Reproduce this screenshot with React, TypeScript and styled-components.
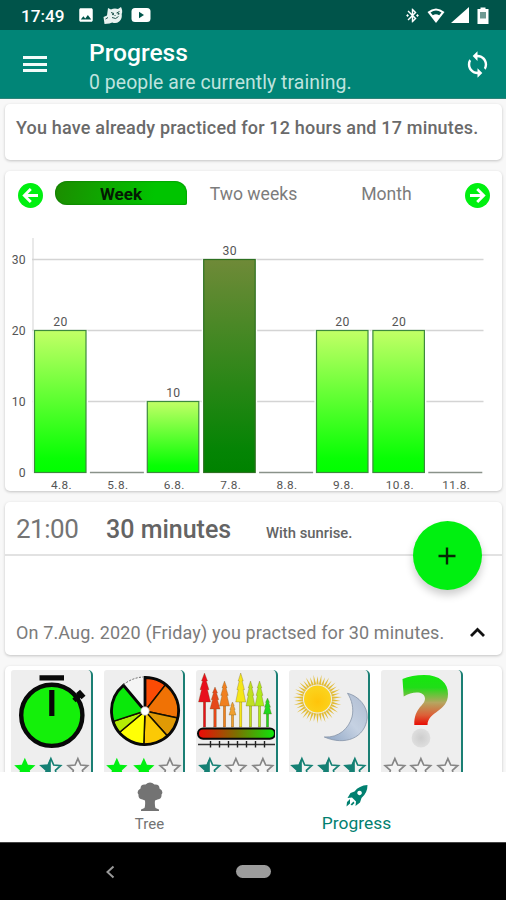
import React from "react";
import styled, { createGlobalStyle } from "styled-components";
import { MdImage, MdSync, MdBluetoothConnected } from "react-icons/md";

const GlobalStyle = createGlobalStyle`
  * { box-sizing: border-box; }
  html, body { margin: 0; padding: 0; }
  body { font-family: Roboto, "Liberation Sans", sans-serif; overflow: hidden; }
  svg { display: block; }
`;

const Screen = styled.div`
  width: 506px;
  height: 900px;
  display: flex;
  flex-direction: column;
  background: #f8f8f8;
  overflow: hidden;
`;

const StatusBar = styled.div`
  height: 30px;
  flex: none;
  display: flex;
  align-items: center;
  padding: 0 14px 0 21px;
  background: #00544a;
  color: #fff;
`;

const Clock = styled.span`
  width: 56px;
  font-size: 17.2px;
  font-weight: 500;
  line-height: 30px;
  padding-top: 2px;
`;

const Notifications = styled.div`
  display: flex;
  align-items: center;
  gap: 8px;
  flex: 1;
`;

const SystemIcons = styled.div`
  display: flex;
  align-items: center;
  gap: 5px;
`;

const AppBar = styled.header`
  height: 69px;
  flex: none;
  display: flex;
  align-items: center;
  padding: 0 14px 0 23px;
  background: #018577;
  border-bottom: 1px solid #2f8379;
  color: #fff;
`;

const MenuIcon = styled.div`
  width: 24px;
  height: 16px;
  margin-right: 42px;
  display: flex;
  flex-direction: column;
  justify-content: space-between;
`;

const MenuLine = styled.i`
  height: 3px;
  background: #f2fbf9;
`;

const Titles = styled.div`
  flex: 1;
  padding-top: 5px;
`;

const Title = styled.h1`
  margin: 0;
  font-size: 24.6px;
  line-height: 32px;
  font-weight: 500;
`;

const Subtitle = styled.div`
  font-size: 19.4px;
  line-height: 27px;
  letter-spacing: 0.07px;
  color: #bfe3de;
`;

const Content = styled.main`
  flex: 1;
  min-height: 0;
  overflow: hidden;
  display: flex;
  flex-direction: column;
  gap: 11px;
  padding: 5px 4px 0 5px;
`;

const Card = styled.section<{ $height: number }>`
  height: ${(p) => p.$height}px;
  flex: none;
  background: #fff;
  border-radius: 5px;
  box-shadow: 0 1px 3px rgba(0, 0, 0, 0.22);
`;

const Summary = styled.p`
  margin: 0;
  padding: 11px 0 0 11px;
  font-size: 18px;
  line-height: 26px;
  font-weight: 500;
  letter-spacing: 0.18px;
  color: #6a6a6a;
  white-space: nowrap;
`;

const RangeBar = styled.div`
  height: 54px;
  display: flex;
  align-items: flex-start;
  padding: 10px 12px 0 13px;
`;

const RoundArrow = styled.div`
  width: 25px;
  height: 25px;
  margin-top: 2px;
  border-radius: 50%;
  background: #00f010;
`;

const Tab = styled.div<{ $active?: boolean }>`
  width: ${(p) => (p.$active ? 132 : 133)}px;
  height: 24px;
  line-height: 26px;
  text-align: center;
  font-size: ${(p) => (p.$active ? 17 : 17.6)}px;
  font-weight: ${(p) => (p.$active ? 700 : 400)};
  color: ${(p) => (p.$active ? "#031a03" : "#7c7c7c")};
  background: ${(p) => (p.$active ? "linear-gradient(100deg, #1c8c00, #00c400 75%)" : "none")};
  border-radius: 12px 12px 2px 12px;
  box-shadow: ${(p) => (p.$active ? "inset 0 0 2px #006b00" : "none")};
`;

const Tabs = styled.div`
  flex: 1;
  display: flex;
  padding-left: 12px;
`;

const SessionHead = styled.div`
  height: 54px;
  display: flex;
  align-items: baseline;
  padding: 9px 0 0 11px;
  border-bottom: 2px solid #e2e2e2;
  line-height: 36px;
  color: #646464;
`;

const SessionTime = styled.span`
  width: 90px;
  font-size: 26px;
  letter-spacing: -0.5px;
  color: #747474;
`;

const SessionLength = styled.span`
  width: 160px;
  font-size: 25px;
  font-weight: 500;
`;

const SessionNote = styled.span`
  font-size: 14.8px;
  font-weight: 500;
`;

const SessionFoot = styled.div`
  height: 99px;
  display: flex;
  justify-content: space-between;
  align-items: flex-end;
  padding: 0 16px 9px 11px;
  font-size: 18px;
  line-height: 26px;
  letter-spacing: 0.13px;
  color: #7b7b7b;
  white-space: nowrap;
`;

const SessionCard = styled(Card)`
  position: relative;
`;

const AddButton = styled.button`
  position: absolute;
  left: 408px;
  top: 19px;
  width: 69px;
  height: 69px;
  border: 0;
  padding: 0 1px 0 0;
  border-radius: 50%;
  background: #00f010;
  display: flex;
  align-items: center;
  justify-content: center;
  box-shadow: 0 5px 8px rgba(0, 0, 0, 0.2);
`;

const Tiles = styled(Card)`
  display: flex;
  gap: 11px;
  padding: 4px 0 0 6px;
`;

const Tile = styled.div`
  width: 81.5px;
  height: 130px;
  background: #eee;
  border-right: 2.5px solid #1b7f74;
  border-radius: 3px 5px 0 0;
`;

const Rating = styled.div`
  display: flex;
  gap: 2px;
  margin-top: 4px;
  padding-left: 1.5px;
`;

const BottomNav = styled.nav`
  height: 70px;
  flex: none;
  display: flex;
  background: #fff;
  padding: 0 46px 0 46px;
`;

const NavItem = styled.div<{ $active?: boolean }>`
  flex: 1;
  display: flex;
  flex-direction: column;
  align-items: center;
  padding-top: 9px;
  color: ${(p) => (p.$active ? "#018070" : "#737373")};
`;

const NavLabel = styled.span<{ $active?: boolean }>`
  font-size: ${(p) => (p.$active ? 17.4 : 15)}px;
  line-height: 24px;
`;

const SystemNav = styled.div`
  height: 58px;
  flex: none;
  background: #000;
  border-top: 1px solid #444;
  display: flex;
  align-items: center;
  padding-left: 104px;
  gap: 120px;
`;

const HomePill = styled.div`
  width: 35px;
  height: 13px;
  border-radius: 7px;
  background: #9c9c9c;
`;

const Arrow = ({ flip }: { flip?: boolean }) => (
  <RoundArrow>
    <svg width="25" height="25" viewBox="0 0 25 25" fill="none" stroke="#fff" strokeWidth="2.8">
      <path d={flip ? "M5 12.5H18M12.2 6l6.5 6.5-6.5 6.5" : "M20 12.5H7M12.8 6l-6.5 6.5 6.5 6.5"} />
    </svg>
  </RoundArrow>
);

const DAYS = [
  { label: "4.8.", value: 20 },
  { label: "5.8.", value: 0 },
  { label: "6.8.", value: 10 },
  { label: "7.8.", value: 30, selected: true },
  { label: "8.8.", value: 0 },
  { label: "9.8.", value: 20 },
  { label: "10.8.", value: 20 },
  { label: "11.8.", value: 0 },
];

const BASE = 247.5;
const UNIT = 7.1;

const Chart = () => (
  <svg width="497" height="266" viewBox="5 0 497 266" fontFamily="Roboto, sans-serif" fontSize="12.2" fill="#555">
    <defs>
      <linearGradient id="bar" x1="0" y1="0" x2="0" y2="1">
        <stop offset="0" stopColor="#c2ff66" />
        <stop offset=".9" stopColor="#08ff04" />
        <stop offset="1" stopColor="#00ff00" />
      </linearGradient>
      <linearGradient id="barSelected" x1="0" y1="0" x2="0" y2="1">
        <stop offset="0" stopColor="#6f8a38" />
        <stop offset=".9" stopColor="#048404" />
        <stop offset="1" stopColor="#008200" />
      </linearGradient>
    </defs>
    <path d="M33 13V247" stroke="#e2e2e2" strokeWidth="1.5" />
    {[0, 10, 20, 30].map((v) => (
      <g key={v}>
        {v > 0 && <path d={`M32 ${BASE - v * UNIT}H483.5`} stroke="#d4d4d4" strokeWidth="1.3" />}
        <text x="25.5" y={BASE - v * UNIT + 4} textAnchor="end">{v}</text>
      </g>
    ))}
    {DAYS.map((d, i) => {
      const x = 34.5 + i * 56.4;
      const h = d.value * UNIT;
      return (
        <g key={d.label}>
          {d.value > 0 ? (
            <>
              <rect x={x - 2} y={BASE - h} width="55.5" height={h} fill="#fff" />
              <rect x={x} y={BASE - h} width="51.5" height={h} fill={d.selected ? "url(#barSelected)" : "url(#bar)"} stroke={d.selected ? "#2d7020" : "#3d8a3d"} strokeWidth="1.2" />
              <text x={x + 26} y={BASE - h - 5} textAnchor="middle" letterSpacing=".3">{d.value}</text>
            </>
          ) : (
            <path d={`M${x - 1} ${BASE}h54`} stroke="#8a928a" strokeWidth="1.3" />
          )}
          <text x={x + 27} y="264" fontSize="11.8" textAnchor="middle" letterSpacing=".4">{d.label}</text>
        </g>
      );
    })}
  </svg>
);

const STAR = "M12 1.5l3.1 7.1 7.7.7-5.8 5.1 1.7 7.6-6.7-4-6.7 4 1.7-7.6-5.8-5.1 7.7-.7z";
type StarKind = "full" | "half" | "empty";

const Star = ({ kind }: { kind: StarKind }) => (
  <svg width="25" height="25" viewBox="0 0 25 25">
    {kind === "full" ? (
      <path d={STAR} fill="#00f010" />
    ) : (
      <path d={STAR} transform="translate(1 1.1) scale(.92)" fill="#f4f4f4" stroke={kind === "half" ? "#158074" : "#858585"} strokeWidth="1.8" />
    )}
    {kind === "half" && <path d="M12 1.5v16.5l-6.7 4 1.7-7.6-5.8-5.1 7.7-.7z" fill="#158074" />}
  </svg>
);

const Stopwatch = () => (
  <svg width="79" height="82" viewBox="11 670 79 82">
    <circle cx="51.8" cy="715.3" r="30.6" fill="#14f00a" stroke="#080808" strokeWidth="4.4" />
    <path d="M39.5 677.8H64M51.8 690v26" stroke="#080808" strokeWidth="5.2" />
    <path d="M74 700.500l6-5.500" stroke="#080808" strokeWidth="5" />
    <path d="M78 691.500l5.500 6" stroke="#080808" strokeWidth="5.500" />
  </svg>
);

const SLICES: [number, number, string][] = [
  [0, 38, "#fb4b05"],
  [38, 102, "#f07205"],
  [102, 138, "#e09a05"],
  [138, 182, "#fbc905"],
  [182, 230, "#ffff05"],
  [230, 252, "#b4ec05"],
  [252, 320, "#0ae80a"],
];

const point = (angle: number, r: number) => {
  const a = ((angle - 90) * Math.PI) / 180;
  return `${(41 + r * Math.cos(a)).toFixed(2)} ${(41 + r * Math.sin(a)).toFixed(2)}`;
};

const Wheel = () => (
  <svg width="79" height="82" viewBox="0 0 79 82">
    <path d={`M41 41L${point(320, 34)}A34 34 0 0 1 41 7z`} fill="#f5f5f5" />
    {SLICES.map(([from, to, color]) => (
      <path key={from} d={`M41 41L${point(from, 33.5)}A33.5 33.5 0 0 1 ${point(to, 33.5)}z`} fill={color} stroke="#151000" strokeWidth="1.5" />
    ))}
    <path d={`M41 41L41 7.5A33.5 33.5 0 1 1 ${point(320, 33.5)}L41 41`} fill="none" stroke="#080808" strokeWidth="2.8" />
    <path d={`M${point(321, 34)}A34 34 0 0 1 39 7`} fill="none" stroke="#666" strokeDasharray="2 1.4" />
    <circle cx="41" cy="41" r="4.2" fill="#fff" stroke="#bbb" strokeWidth=".7" />
  </svg>
);

const TREES: [number, number, number, number, string][] = [
  [204.5, 673, 702, 6, "#e8101c"],
  [215, 687, 709, 5, "#e5481a"],
  [224.5, 681, 706, 5, "#f08020"],
  [232.5, 702, 715, 3.5, "#f0a030"],
  [240.7, 673, 702, 5, "#f5e61a"],
  [250.5, 681, 706, 4.5, "#bfe020"],
  [259.5, 681, 706, 4.5, "#b0ea1a"],
  [267.5, 698, 714, 4, "#20d820"],
];

const Forest = () => (
  <svg width="79" height="82" viewBox="196 670 79 82">
    <defs>
      <linearGradient id="ground" x1="0" x2="1" y1="0" y2="0">
        <stop offset="0" stopColor="#f00808" />
        <stop offset=".5" stopColor="#7c7000" />
        <stop offset="1" stopColor="#0be80b" />
      </linearGradient>
    </defs>
    {TREES.map(([x, top, bottom, w, color]) => {
      const s = (bottom - top) / 4;
      return (
        <g key={x} fill={color} stroke="#6b5520" strokeWidth=".3">
          <rect x={x - 1.2} y={bottom - 1} width="2.4" height={728 - bottom} />
          <path d={`M${x} ${top}l${w * 0.5} ${s * 1.1}h-${w * 0.2}l${w * 0.45} ${s * 1.2}h-${w * 0.25}L${x + w} ${bottom}H${x - w}L${x - w * 0.5} ${top + s * 2.3}h-${w * 0.25}l${w * 0.45}-${s * 1.2}h-${w * 0.2}z`} />
        </g>
      );
    })}
    <rect x="198" y="728.5" width="77" height="10.2" rx="5.1" fill="url(#ground)" stroke="#080808" strokeWidth="2" />
    <path d="M198 744.5h77" stroke="#333" strokeWidth="1.4" />
    <path d="M210.5 741v6.5M219.5 741v6.5M228.5 741v6.5M237.5 741v6.5M246.5 741v6.5M255.5 741v6.5M264.5 741v6.5" stroke="#222" strokeWidth="1.4" />
  </svg>
);

const RAYS = Array.from({ length: 38 }, (_, i) => (i * 360) / 38);

const SunMoon = () => (
  <svg width="79" height="82" viewBox="288 670 79 82">
    <defs>
      <radialGradient id="sun" cx=".5" cy=".6">
        <stop offset="0" stopColor="#ffc40a" />
        <stop offset="1" stopColor="#fbd21c" />
      </radialGradient>
      <linearGradient id="moon" x1="0" x2="1" y1="1" y2="0">
        <stop offset="0" stopColor="#8ea5c4" />
        <stop offset=".5" stopColor="#c5d1e2" />
        <stop offset="1" stopColor="#aebbd0" />
      </linearGradient>
    </defs>
    {RAYS.map((angle, i) => (
      <path key={angle} d={`M315.3 684.500L316.5 ${i % 2 ? 674.5 : 676}L317.7 684.500z`} fill="#e2bd3a" transform={`rotate(${angle} 316.5 699)`} />
    ))}
    <circle cx="316.5" cy="699" r="13.5" fill="url(#sun)" />
    <path d="M346.5 693.300C358 696 367 707 366.200 718C364 738 344 746 323.300 737C338 738 348 728 351 717C353 709 351 700 346.500 693.300z" fill="url(#moon)" stroke="#8794a8" strokeWidth=".8" />
  </svg>
);

const Mystery = () => (
  <svg width="79" height="82" viewBox="380 670 79 82">
    <defs>
      <linearGradient id="hook" x1="0" x2="0" y1="0" y2="1">
        <stop offset="0" stopColor="#14e80c" />
        <stop offset=".25" stopColor="#20dd18" />
        <stop offset=".55" stopColor="#b5a660" />
        <stop offset=".8" stopColor="#dc6038" />
        <stop offset="1" stopColor="#e80c04" />
      </linearGradient>
      <radialGradient id="orb">
        <stop offset="0" stopColor="#cdcdcd" />
        <stop offset="1" stopColor="#dedede" />
      </radialGradient>
    </defs>
    <path d="M401.500 679Q411 675 423 675C439 675 447 683 447 694C447 712 427 711 426.500 725H413.300C413 707 424 706 424 698.500C423.500 691 412 691 402.700 696.500z" fill="url(#hook)" />
    <circle cx="420" cy="738" r="9.4" fill="url(#orb)" />
  </svg>
);

const TILES: { art: React.ReactNode; stars: StarKind[] }[] = [
  { art: <Stopwatch />, stars: ["full", "half", "empty"] },
  { art: <Wheel />, stars: ["full", "full", "empty"] },
  { art: <Forest />, stars: ["half", "empty", "empty"] },
  { art: <SunMoon />, stars: ["half", "half", "half"] },
  { art: <Mystery />, stars: ["empty", "empty", "empty"] },
];

export default function App() {
  return (
    <>
      <GlobalStyle />
      <Screen>
        <StatusBar>
          <Clock>17:49</Clock>
          <Notifications>
            <MdImage size={18} />
            <svg width="20" height="19" viewBox="0 0 20 19">
              <path d="M5 2l3 1.500q3-1.500 7-.5l3-2q2 4 .7 7 .8 5-2.500 7.500-3 2.500-7 1L6.500 17.500 1.500 18 .5 11l3.500-1.500z" fill="#e9f3f1" />
              <path d="M8 6.500l3 1M13.500 7l3-1.500M9 11.500q4 2.500 6.500-1M2.500 13l2.500-1.500M12 9v1" stroke="#24564f" strokeWidth="1" fill="none" />
              <circle cx="10" cy="8.200" r="1" fill="#24564f" />
              <circle cx="15.500" cy="7.800" r="1" fill="#24564f" />
            </svg>
            <svg width="20" height="14" viewBox="0 0 20 14">
              <rect x=".5" width="19" height="14" rx="3.500" fill="#fff" />
              <path d="M8 3.800v6.400l5-3.200z" fill="#00544a" />
            </svg>
          </Notifications>
          <SystemIcons>
            <MdBluetoothConnected size={17} />
            <svg width="20" height="17" viewBox="0 0 20 17">
              <path d="M10 16L1.500 5Q10-2 18.500 5z" fill="#fff" />
              <path d="M4.500 5.500Q10 1.500 15.500 5.500L13.200 8.300Q10 6 6.800 8.300z" fill="#00544a" />
            </svg>
            <svg width="18" height="16" viewBox="0 0 18 16">
              <path d="M0 16L18 0v16z" fill="#fff" />
            </svg>
            <svg width="18" height="17" viewBox="0 0 18 17">
              <path d="M3.500 2h3V.5h5V2h3v15h-11z" fill="#fff" />
              <path d="M6 5h6v6.500H6z" fill="#6f9a93" />
            </svg>
          </SystemIcons>
        </StatusBar>

        <AppBar>
          <MenuIcon>
            <MenuLine />
            <MenuLine />
            <MenuLine />
          </MenuIcon>
          <Titles>
            <Title>Progress</Title>
            <Subtitle>0 people are currently training.</Subtitle>
          </Titles>
          <MdSync size={29} />
        </AppBar>

        <Content>
          <Card $height={56}>
            <Summary>You have already practiced for 12 hours and 17 minutes.</Summary>
          </Card>

          <Card $height={320}>
            <RangeBar>
              <Arrow />
              <Tabs>
                <Tab $active>Week</Tab>
                <Tab>Two weeks</Tab>
                <Tab>Month</Tab>
              </Tabs>
              <Arrow flip />
            </RangeBar>
            <Chart />
          </Card>

          <SessionCard $height={153}>
            <SessionHead>
              <SessionTime>21:00</SessionTime>
              <SessionLength>30 minutes</SessionLength>
              <SessionNote>With sunrise.</SessionNote>
            </SessionHead>
            <SessionFoot>
              <span>On 7.Aug. 2020 (Friday) you practsed for 30 minutes.</span>
              <svg width="17" height="28" viewBox="0 0 17 28">
                <path d="M2 18l6.500-6.500L15 18" fill="none" stroke="#111" strokeWidth="2.800" />
              </svg>
            </SessionFoot>
            <AddButton aria-label="Add">
              <svg width="18" height="18" viewBox="0 0 18 18">
                <path d="M9 .5v17M.5 9h17" stroke="#052805" strokeWidth="2.400" />
              </svg>
            </AddButton>
          </SessionCard>

          <Tiles $height={140}>
            {TILES.map((tile, i) => (
              <Tile key={i}>
                {tile.art}
                <Rating>
                  {tile.stars.map((kind, n) => (
                    <Star key={n} kind={kind} />
                  ))}
                </Rating>
              </Tile>
            ))}
          </Tiles>
        </Content>

        <BottomNav>
          <NavItem>
            <svg width="28" height="31" viewBox="0 0 28 31" fill="currentColor">
              <path d="M9.500 3.500Q14-.5 18.500 3.500 23.500 3 23.500 7.500 28 10 25.500 13.500 26 18 21.500 18.500L19 19.500Q18.500 24 19.500 27L23 28.500V30H5v-1.500L8.500 27Q9.500 24 9 19.500L6.500 18.500Q2 18 2.500 13.500 0 10 4.500 7.500 4.500 3 9.500 3.500z" />
            </svg>
            <NavLabel>Tree</NavLabel>
          </NavItem>
          <NavItem $active>
            <svg width="24" height="30" viewBox="0 0 24 30" fill="currentColor">
              <path fillRule="evenodd" d="M22.500 4Q14 4.500 9.500 10.500L5.500 12 2.500 17l4.500-.5 4 4-.5 4.500 4.500-3.500 1.500-4.500Q22.500 12 22.500 4zM14.500 14.300a2.300 2.300 0 1 1 .1 0z" />
              <path d="M5 18l-3 3-.5 4.500 3.500-3zM8.500 20.500L5.500 23.500 7 24.500 9.500 22z" />
            </svg>
            <NavLabel $active>Progress</NavLabel>
          </NavItem>
        </BottomNav>

        <SystemNav>
          <svg width="12" height="14" viewBox="0 0 12 14">
            <path d="M9.500 1.500L3.500 7l6 5.500" fill="none" stroke="#999" strokeWidth="2" />
          </svg>
          <HomePill />
        </SystemNav>
      </Screen>
    </>
  );
}
